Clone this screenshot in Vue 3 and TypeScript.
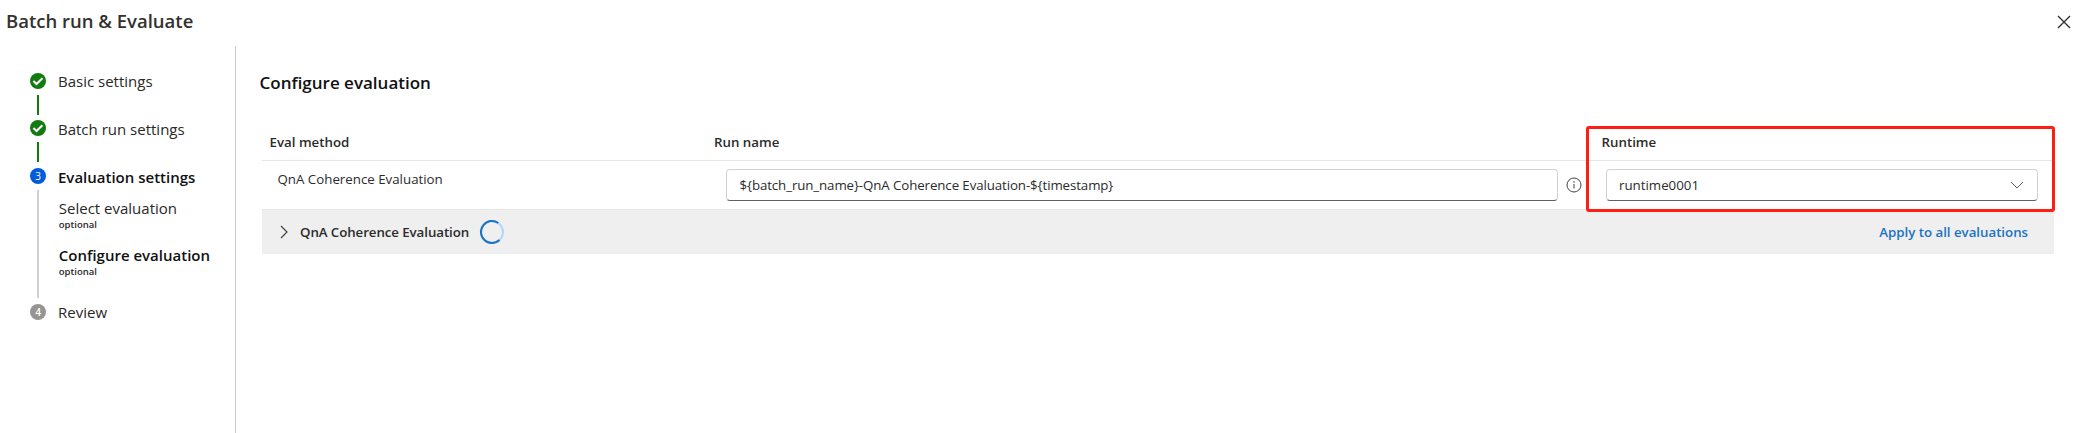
<script setup lang="ts">
interface SubStep { label: string; note: string; cls: string }
interface Step { label: string; state: 'done' | 'current' | 'todo'; cls: string; subs: SubStep[] }

const steps: Step[] = [
  { label: 'Basic settings', state: 'done', cls: 's1', subs: [] },
  { label: 'Batch run settings', state: 'done', cls: 's2', subs: [] },
  {
    label: 'Evaluation settings', state: 'current', cls: 's3',
    subs: [
      { label: 'Select evaluation', note: 'optional', cls: 'select' },
      { label: 'Configure evaluation', note: 'optional', cls: 'active' },
    ],
  },
  { label: 'Review', state: 'todo', cls: 's4', subs: [] },
]
</script>

<template>
  <div class="panel">
    <header class="top">
      <h1>Batch run &amp; Evaluate</h1>
      <svg class="close" width="14" height="14" viewBox="0 0 14 14"><path d="M1 1 13 13M13 1 1 13" /></svg>
    </header>
    <div class="body">
      <nav class="steps">
        <div v-for="(s, i) in steps" :key="s.label" class="step" :class="[s.state, s.cls]">
          <div class="rail">
            <span class="dot">
              <svg v-if="s.state === 'done'" width="16" height="16" viewBox="0 0 16 16"><path d="M3.4 8.1 6.5 11 12.4 5.2" /></svg>
              <template v-else>{{ i + 1 }}</template>
            </span>
            <span v-if="i < steps.length - 1" class="line"></span>
          </div>
          <div class="info">
            <div class="label">{{ s.label }}</div>
            <div v-for="b in s.subs" :key="b.label" class="sub" :class="b.cls">
              <div class="sublabel">{{ b.label }}</div>
              <div class="note">{{ b.note }}</div>
            </div>
          </div>
        </div>
      </nav>
      <main class="main">
        <h2>Configure evaluation</h2>
        <div class="table">
          <div class="row head">
            <div class="c1">Eval method</div>
            <div class="c2">Run name</div>
            <div class="c3">Runtime</div>
          </div>
          <div class="row data">
            <div class="c1">QnA Coherence Evaluation</div>
            <div class="c2">
              <div class="field"><span class="value">${batch_run_name}-QnA Coherence Evaluation-${timestamp}</span></div>
              <svg class="infoicon" width="16" height="16" viewBox="0 0 16 16"><circle cx="8" cy="8" r="7" /><path d="M8 7v4.5" /><circle class="pt" cx="8" cy="5" r=".8" /></svg>
            </div>
            <div class="c3">
              <div class="field pick">
                <span>runtime0001</span>
                <svg width="14" height="8" viewBox="0 0 14 8"><path d="M1 1 7 7 13 1" /></svg>
              </div>
            </div>
          </div>
          <div class="group">
            <svg class="chev" width="8" height="14" viewBox="0 0 8 14"><path d="M1 1 7 7 1 13" /></svg>
            <span class="gname">QnA Coherence Evaluation</span>
            <svg class="spin" width="26" height="26" viewBox="0 0 26 26"><circle cx="13" cy="13" r="11" /><path d="M19.3 4A11 11 0 1 0 20.4 21.1" /></svg>
            <a class="apply">Apply to all evaluations</a>
          </div>
          <div class="mark"></div>
        </div>
      </main>
    </div>
  </div>
</template>

<style>
body { background: #fff; }
</style>

<style scoped>
.panel { height: 433px; overflow: hidden; display: flex; flex-direction: column; background: #fff; color: #2b2b2b; font-family: "Open Sans", "Noto Sans", sans-serif; font-size: 13.3px; white-space: nowrap; }
h1, h2 { margin: 0; font-weight: 600; }
svg { display: block; fill: none; flex: none; }
.top { height: 46px; flex: none; display: flex; justify-content: space-between; }
h1 { font-size: 18.5px; line-height: 28px; padding: 7px 0 0 6px; color: #323130; }
.close { margin: 15px 15px 0 0; stroke: #323130; stroke-width: 1.4; }
.body { flex: 1; display: flex; }
.steps { width: 236px; flex: none; border-right: 1px solid #ccc; padding: 27px 0 0 30px; box-sizing: border-box; font-size: 15px; color: #292827; }
.step { display: flex; }
.s1 { height: 47px; }
.s2 { height: 48px; }
.s3 { height: 136px; }
.rail { width: 16px; display: flex; flex-direction: column; align-items: center; }
.dot { width: 16px; height: 16px; border-radius: 50%; background: #107c10; color: #fff; font-size: 10px; line-height: 16px; text-align: center; }
.dot path { stroke: #fff; stroke-width: 2; }
.current .dot { background: #015cda; }
.todo .dot { background: #979593; font-weight: 600; }
.line { width: 2px; height: 20px; margin-top: 6px; background: #107c10; }
.current .line { height: 108px; background: #d2d0ce; }
.info { margin-left: 12px; line-height: 20px; }
.s1 .label, .s4 .label { margin-top: -2px; }
.s2 .label, .s3 .label { margin-top: -1px; }
.current .label, .active .sublabel { font-weight: 600; color: #111; }
.sub { height: 47px; padding-top: 11px; padding-left: 0.8px; box-sizing: border-box; }
.note { font-size: 9.5px; line-height: 12px; margin-top: 1px; font-weight: 600; }
.main { flex: 1; padding: 25px 31px 0 23px; }
h2 { font-size: 17px; line-height: 24px; color: #111; padding-left: 0.5px; }
.table { position: relative; margin: 31px 0 0 3px; width: 1792px; }
.row { display: grid; box-sizing: border-box; grid-template-columns: 452px 872px 468px; }
.head { height: 35px; border-bottom: 1px solid #e6e6e6; font-weight: 600; line-height: 32px; }
.head .c1 { padding-left: 7.5px; }
.head .c3 { padding-left: 15.5px; }
.data { height: 49px; border-bottom: 1px solid #e6e6e6; }
.data .c1 { padding: 8px 0 0 15.5px; line-height: 20px; }
.data .c2 { display: flex; padding: 8px 0 0 12px; }
.data .c3 { padding: 8px 0 0 20px; }
.field { width: 832px; height: 32px; box-sizing: border-box; border: 1px solid #d1d1d1; border-bottom-color: #616161; border-radius: 4px; padding-left: 12.5px; line-height: 31px; flex: none; }
.value { letter-spacing: -0.1px; }
.infoicon { margin: 8px 0 0 8px; stroke: #424242; }
.infoicon .pt { fill: #424242; stroke: none; }
.pick { width: 432px; display: flex; align-items: center; justify-content: space-between; padding: 0 13px 0 12px; }
.pick svg { stroke: #616161; }
.group { height: 44px; background: #efefef; display: flex; align-items: center; padding: 0 26px 0 18px; font-weight: 600; }
.chev { stroke: #424242; stroke-width: 1.2; }
.gname { margin-left: 12px; letter-spacing: -0.08px; }
.spin { margin-left: 10px; }
.spin circle { stroke: #b4d6fa; stroke-width: 2; }
.spin path { stroke: #1a73c4; stroke-width: 2; }
.apply { margin-left: auto; color: #1a73c4; letter-spacing: -0.03px; }
.mark { position: absolute; left: 1324px; top: 0; width: 469px; height: 86px; box-sizing: border-box; border: 3px solid #ff1f12; border-radius: 3px; }
</style>
